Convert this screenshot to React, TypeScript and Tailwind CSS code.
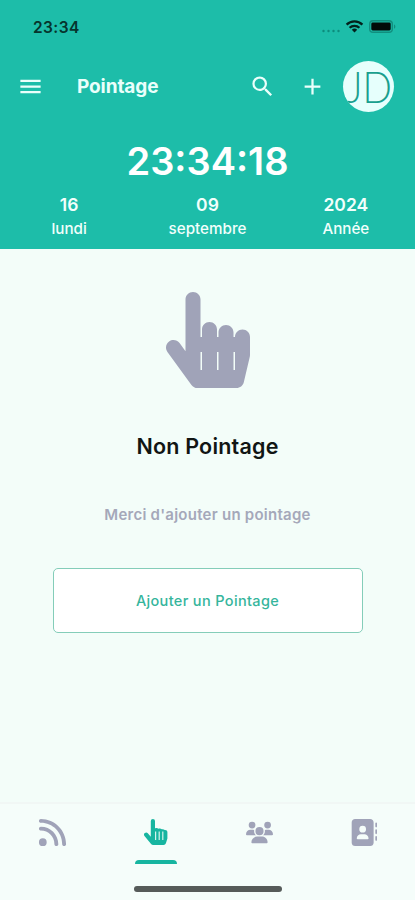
import { FaHandPointer } from "react-icons/fa";
import { FaAddressBook, FaRss, FaUsers } from "react-icons/fa6";
import { MdAdd, MdMenu, MdSearch } from "react-icons/md";

const dateParts = [
    { value: "16", label: "lundi" },
    { value: "09", label: "septembre" },
    { value: "2024", label: "Année" },
];

function StatusBar() {
    return (
        <div className="flex h-[54px] items-center justify-between pl-[33px] pr-[18px]">
            <span className="pt-px text-[15.5px] font-semibold tracking-[0.4px] text-[#06342d]">23:34</span>
            <svg width="76" height="18" viewBox="0 0 76 18">
                <g fill="#0c8c7c">
                    <circle cx="2.5" cy="13" r="1.2" />
                    <circle cx="7.5" cy="13" r="1.2" />
                    <circle cx="12.5" cy="13" r="1.2" />
                    <circle cx="17.5" cy="13" r="1.2" />
                </g>
                <g fill="none" stroke="#03211c" strokeWidth="2.3">
                    <path d="M25.6 6.6a11.3 11.3 0 0 1 15.8 0" />
                    <path d="M28.6 9.8a7 7 0 0 1 9.8 0" />
                </g>
                <path d="M33.5 14.4 30.8 11.7a3.9 3.9 0 0 1 5.4 0z" fill="#03211c" />
                <rect x="48.7" y="2.7" width="22.6" height="11.6" rx="3.4" fill="none" stroke="#118e7e" strokeWidth="1.4" />
                <rect x="50.3" y="4.6" width="19.4" height="7.8" rx="1.4" fill="#020b09" />
                <path d="M73 6.4c1.8.5 1.8 3.7 0 4.2z" fill="#118e7e" />
            </svg>
        </div>
    );
}

function Header() {
    return (
        <div className="flex h-[64px] items-center pl-[17px] pr-[21px] text-[#eafffb]">
            <MdMenu className="size-[27px]" />
            <span className="ml-[33px] flex-1 pt-[3px] text-[19px] font-bold tracking-[-0.1px]">Pointage</span>
            <MdSearch className="size-[27px]" />
            <MdAdd className="ml-[23px] size-[27px]" />
            <div className="ml-[17px] flex size-[51px] items-center justify-center overflow-hidden rounded-full bg-[#e6fffc]">
                <span className="scale-x-90 pl-[2px] font-['Lato',sans-serif] text-[43px] leading-none font-light text-[#1a9f8e]">JD</span>
            </div>
        </div>
    );
}

function Clock() {
    return (
        <div className="flex h-[131px] flex-col items-center pt-[19px] text-[#f2fffc]">
            <span className="text-[38px] leading-[48px] font-semibold text-white">23:34:18</span>
            <div className="mt-[8px] grid w-full grid-cols-3">
                {dateParts.map((part) => (
                    <div key={part.label} className="flex flex-col items-center">
                        <span className="text-[17.5px] leading-6 font-semibold">{part.value}</span>
                        <span className="text-[15.2px] leading-[23px] font-medium">{part.label}</span>
                    </div>
                ))}
            </div>
        </div>
    );
}

function PointerTabIcon() {
    return (
        <svg width="24" height="26" viewBox="0 0 24 26" className="text-[#17b5a0]">
            <path
                d="M6.8 2.1a2.1 2.1 0 0 1 4.2 0v7.3c1.2-.6 2.6-.4 3.5.3 1.3-.5 2.5-.2 3.3.6 1.1-.3 2.2 0 2.9.7 1.5-.2 2.7.7 2.7 2.2v6.3l-1.5 4.7a2.5 2.5 0 0 1-2.4 1.8H9.3a3 3 0 0 1-2.4-1.2L.5 16.9a2.1 2.1 0 0 1 3.3-2.6l3 3.5z"
                fill="currentColor"
            />
            <path d="M11.6 12.5v8.5M15.2 12.5v8.5M18.8 12.5v8.5" stroke="#d5f5ed" strokeWidth="1.2" />
        </svg>
    );
}

function BottomNav() {
    return (
        <div className="h-[98px] border-t-2 border-[#f1f7f5] bg-[#f5fdfa] text-[#a0a3b8]">
            <div className="grid h-[60px] grid-cols-4">
                <div className="flex justify-center pt-[13px] pl-px">
                    <FaRss className="size-[31px]" />
                </div>
                <div className="flex flex-col items-center pt-[15px]">
                    <PointerTabIcon />
                    <div className="mt-[15px] h-1 w-[42px] rounded-t-full bg-[#17b5a0]" />
                </div>
                <div className="flex justify-center pt-[15px]">
                    <FaUsers className="size-[27px]" />
                </div>
                <div className="flex justify-center pt-[15px]">
                    <FaAddressBook className="size-[27px]" />
                </div>
            </div>
            <div className="mx-auto mt-[22px] h-[6px] w-[148px] rounded-full bg-[#565b59]" />
        </div>
    );
}

export default function App() {
    return (
        <div className="flex h-[900px] w-[415px] flex-col overflow-hidden bg-[#f3fdf9] font-['Inter',sans-serif]">
            <div className="h-[249px] bg-[#1dbda9]">
                <StatusBar />
                <Header />
                <Clock />
            </div>
            <div className="flex flex-1 flex-col items-center pt-[43px]">
                <FaHandPointer className="h-[96px] w-[84px] text-[#a0a3b8]" />
                <span className="mt-[42px] text-[21.5px] leading-8 font-semibold tracking-[0.2px] text-[#111514]">Non Pointage</span>
                <span className="mt-[41px] text-[15px] leading-6 font-semibold tracking-[0.25px] text-[#a5a8ba]">Merci d'ajouter un pointage</span>
                <button className="mt-[41px] h-[65px] w-[310px] rounded-[5px] border-[1.5px] border-[#84cdb9] bg-white text-[14.5px] font-medium tracking-[0.35px] text-[#35b59c]">
                    Ajouter un Pointage
                </button>
            </div>
            <BottomNav />
        </div>
    );
}
